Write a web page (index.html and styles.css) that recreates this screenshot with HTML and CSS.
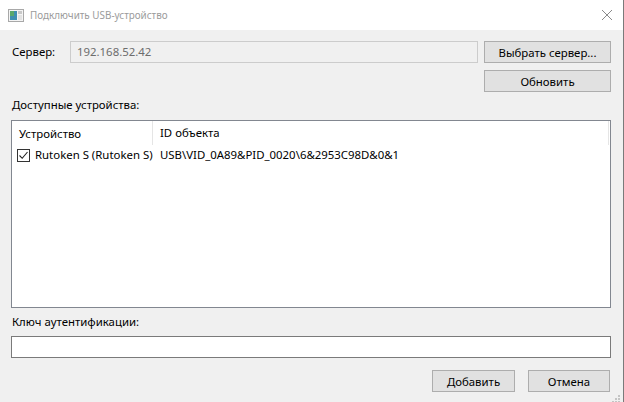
FILE: index.html
```html
<!DOCTYPE html>
<html lang="ru">
<head>
<meta charset="utf-8">
<link rel="stylesheet" href="styles.css">
</head>
<body>
<div class="window">
  <div class="titlebar">
    <svg class="app-icon" width="16" height="14" viewBox="0 0 16 14">
      <rect x="0.5" y="0.5" width="15" height="12" fill="#f4f4f4" stroke="#a8a8a8"/>
      <rect x="2" y="2" width="7" height="9" fill="#3f8fb0"/>
      <rect x="2" y="2" width="4" height="5" fill="#5aa86a"/>
      <rect x="10" y="2" width="4" height="3" fill="#c8c8c8"/>
      <rect x="10" y="6" width="4" height="5" fill="#e2e2e2"/>
    </svg>
    <span class="title">Подключить USB-устройство</span>
    <svg class="close" width="12" height="12" viewBox="0 0 12 12">
      <path d="M1 1 L11 11 M11 1 L1 11" stroke="#8a8a8a" stroke-width="1" fill="none"/>
    </svg>
  </div>
  <div class="content">
    <div class="server-row">
      <span class="label server-label">Сервер:</span>
      <div class="field disabled">192.168.52.42</div>
      <div class="btn-col">
        <div class="btn wide">Выбрать сервер...</div>
        <div class="btn wide">Обновить</div>
      </div>
    </div>
    <div class="label section">Доступные устройства:</div>
    <div class="list">
      <div class="list-head">
        <div class="col c1">Устройство</div>
        <div class="col c2">ID объекта</div>
      </div>
      <div class="list-row">
        <div class="col c1">
          <span class="check">
            <svg width="11" height="11" viewBox="0 0 11 11"><path d="M1.5 5.5 L4.2 8.3 L9.5 2" stroke="#222" stroke-width="1.1" fill="none"/></svg>
          </span>
          <span>Rutoken S (Rutoken S)</span>
        </div>
        <div class="col c2">USB\VID_0A89&amp;PID_0020\6&amp;2953C98D&amp;0&amp;1</div>
      </div>
    </div>
    <div class="label section2">Ключ аутентификации:</div>
    <div class="field key"></div>
    <div class="actions">
      <div class="btn">Добавить</div>
      <div class="btn">Отмена</div>
    </div>
    <div class="grip">
      <svg width="10" height="10" viewBox="0 0 10 10" fill="#c4c4c4">
        <rect x="7" y="1" width="2" height="2"/>
        <rect x="4" y="4" width="2" height="2"/><rect x="7" y="4" width="2" height="2"/>
        <rect x="1" y="7" width="2" height="2"/><rect x="4" y="7" width="2" height="2"/><rect x="7" y="7" width="2" height="2"/>
      </svg>
    </div>
  </div>
</div>
</body>
</html>
```

FILE: styles.css
```css
* { box-sizing: border-box; }
html, body { margin: 0; padding: 0; }
body {
  width: 624px;
  height: 402px;
  overflow: hidden;
  font-family: "Noto Sans", "Open Sans", sans-serif;
  font-size: 11.4px;
  color: #000;
  background: #f0f0f0;
}
.window {
  width: 624px;
  height: 402px;
  border-right: 1px solid #7a7a7a;
  display: flex;
  flex-direction: column;
  background: #f0f0f0;
}
.titlebar {
  height: 30px;
  background: #fff;
  display: flex;
  align-items: center;
  padding-left: 8px;
  padding-right: 10px;
}
.app-icon { margin-right: 6px; margin-top: 1px; }
.title { color: #9b9b9b; flex: 1; font-size: 9.9px; white-space: nowrap; }
.content {
  flex: 1;
  position: relative;
  padding: 11px 12px 0 11px;
  display: flex;
  flex-direction: column;
}
.label { line-height: 16px; white-space: nowrap; }
.server-row {
  display: flex;
  align-items: flex-start;
}
.server-label {
  width: 59px;
  padding-left: 1px;
  line-height: 22px;
}
.field {
  height: 22px;
  line-height: 20px;
  padding-left: 6px;
  border: 1px solid #7a7a7a;
  background: #fff;
}
.field.disabled {
  flex: 1;
  background: #f0f0f0;
  border-color: #cccccc;
  color: #6d6d6d;
}
.btn-col {
  display: flex;
  flex-direction: column;
  gap: 7px;
  margin-left: 6px;
}
.btn {
  height: 22px;
  border: 1px solid #adadad;
  background: #e1e1e1;
  display: flex;
  align-items: center;
  justify-content: center;
  width: 83px;
  white-space: nowrap;
}
.btn.wide { width: 127px; }
.section { margin-top: 5px; padding-left: 1px; }
.list {
  margin-top: 7px;
  height: 188px;
  border: 1px solid #828790;
  background: #fff;
}
.list-head {
  display: flex;
  height: 24px;
  margin-right: 1px;
  border-right: 1px solid #e5e5e5;
}
.list-head .col {
  line-height: 23px;
}
.col { white-space: nowrap; }
.col.c1 { width: 141px; padding-left: 7px; display: flex; align-items: center; }
.col.c2 { flex: 1; padding-left: 7px; }
.list-head .c1 { border-right: 1px solid #e5e5e5; }
.list-row {
  display: flex;
  height: 18px;
  line-height: 18px;
  margin-top: 1px;
}
.list-row .c1 { padding-left: 5px; width: 141px; }
.list-row .c2 { padding-left: 7px; }
.check {
  flex: none;
  width: 13px;
  height: 13px;
  border: 1px solid #333;
  background: #fff;
  display: inline-flex;
  align-items: center;
  justify-content: center;
  margin-right: 5px;
}
.section2 { margin-top: 6px; padding-left: 1px; }
.key { margin-top: 6px; }
.actions {
  display: flex;
  justify-content: flex-end;
  gap: 13px;
  margin-top: 12px;
  padding-right: 1px;
}
.actions .btn:last-child { width: 82px; }
.grip {
  position: absolute;
  right: 2px;
  bottom: 0px;
  width: 10px;
  height: 10px;
}
```
